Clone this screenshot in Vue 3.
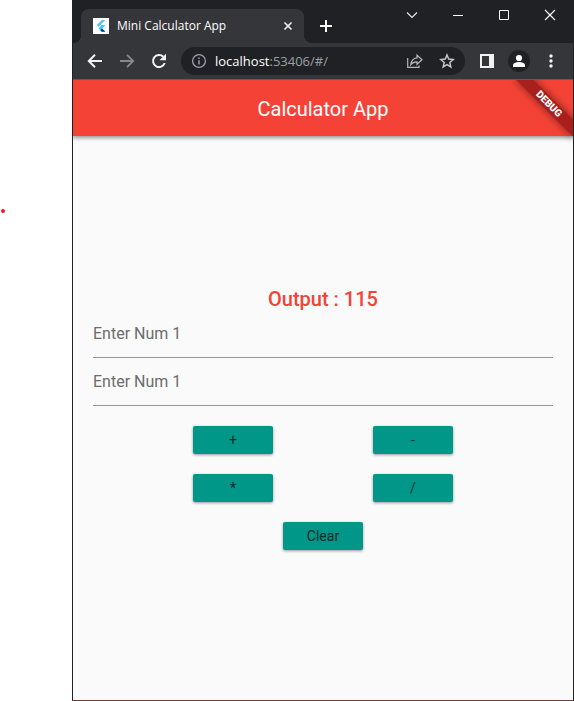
<script setup>
import { ref } from 'vue'

const output = ref(115)
const first = ref('')
const second = ref('')

const rows = [['+', '-'], ['*', '/']]

function calculate(op) {
  const a = Number(first.value)
  const b = Number(second.value)
  if (op === '+') output.value = a + b
  else if (op === '-') output.value = a - b
  else if (op === '*') output.value = a * b
  else output.value = a / b
}

function clearAll() {
  first.value = ''
  second.value = ''
  output.value = 0
}
</script>

<template>
  <div class="desktop">
    <aside class="gutter"><span class="dot"></span></aside>

    <div class="browser">
      <header class="tabstrip">
        <div class="tab">
          <svg class="favicon" viewBox="0 0 16 16" width="16" height="16" aria-hidden="true">
            <rect width="16" height="16" fill="#fff" />
            <path d="M8.800 2h3.600L5.600 8.900 3.800 7.100z" fill="#54c5f8" />
            <path d="M8.800 7h3.600L9.100 10.400 12.400 13.800H8.800L5.500 10.400z" fill="#41c0f7" />
            <path d="M9.100 10.400 12.400 13.800H8.800L7.300 12.200z" fill="#01479b" />
          </svg>
          <span class="tab-title">Mini Calculator App</span>
          <button class="tab-close" type="button" aria-label="Close tab">
            <svg viewBox="0 0 16 16" width="16" height="16"><path d="M4.500 4.500l7 7M11.500 4.500l-7 7" stroke="#f1f3f4" stroke-width="1.600" /></svg>
          </button>
        </div>
        <button class="new-tab" type="button" aria-label="New tab">
          <svg viewBox="0 0 16 16" width="16" height="16"><path d="M8 2v12M2 8h12" stroke="#fff" stroke-width="2" /></svg>
        </button>
        <nav class="window-controls" aria-label="Window">
          <button type="button" aria-label="Search tabs">
            <svg viewBox="0 0 16 16" width="16" height="16"><path d="M3 5.500l5 5 5-5" stroke="#e6e7e8" stroke-width="1.200" fill="none" /></svg>
          </button>
          <button type="button" aria-label="Minimize">
            <svg viewBox="0 0 16 16" width="16" height="16"><path d="M3 8.500h10" stroke="#fff" /></svg>
          </button>
          <button type="button" aria-label="Maximize">
            <svg viewBox="0 0 16 16" width="16" height="16"><path d="M3.500 3.500h9v9h-9z" stroke="#fff" fill="none" /></svg>
          </button>
          <button type="button" aria-label="Close">
            <svg viewBox="0 0 16 16" width="16" height="16"><path d="M3 3l10 10M13 3L3 13" stroke="#fff" stroke-width="1.200" /></svg>
          </button>
        </nav>
      </header>

      <div class="toolbar">
        <button type="button" aria-label="Back">
          <svg viewBox="0 0 16 16" width="16" height="16"><path d="M15 8H2.500M8 1.800L1.800 8 8 14.200" stroke="#f1f3f4" stroke-width="2" fill="none" /></svg>
        </button>
        <button type="button" aria-label="Forward">
          <svg viewBox="0 0 16 16" width="16" height="16"><path d="M1 8h12.500M8 1.800L14.200 8 8 14.200" stroke="#86888c" stroke-width="1.800" fill="none" /></svg>
        </button>
        <button type="button" aria-label="Reload">
          <svg viewBox="0 0 16 16" width="16" height="16">
            <path d="M13.700 10A6 6 0 1 1 12.300 3.800" stroke="#f1f3f4" stroke-width="2" fill="none" />
            <path d="M15 .800v6.500H8.500z" fill="#f1f3f4" />
          </svg>
        </button>

        <div class="omnibox">
          <button type="button" aria-label="Site information">
            <svg viewBox="0 0 16 16" width="16" height="16">
              <circle cx="8" cy="8" r="6.400" stroke="#9aa0a6" stroke-width="1.300" fill="none" />
              <path d="M8 7.200v4.300M8 4.500v1.600" stroke="#9aa0a6" stroke-width="1.500" />
            </svg>
          </button>
          <div class="address" role="textbox" aria-label="Address" contenteditable="true" spellcheck="false"><span class="host">localhost</span>:53406/#/</div>
          <button type="button" aria-label="Share">
            <svg viewBox="0 0 16 16" width="16" height="16" fill="none" stroke="#b4b6ba" stroke-width="1.200">
              <path d="M.700 5v9.400H12V12.500" />
              <path d="M10 2.200l5 4.600-5 4.500V8.800C7.200 8.700 5.300 9.600 3.800 11.600 4.300 7.900 6.400 5.300 10 4.900z" />
            </svg>
          </button>
          <button type="button" aria-label="Bookmark">
            <svg viewBox="0 0 16 16" width="16" height="16">
              <path d="M8 2l1.700 4.100 4.500.4-3.400 3 1 4.400L8 11.600l-3.800 2.300 1-4.400-3.400-3 4.500-.4z" stroke="#c4c6c9" stroke-width="1.500" fill="none" />
            </svg>
          </button>
        </div>

        <button type="button" aria-label="Side panel">
          <svg viewBox="0 0 16 16" width="16" height="16"><path fill-rule="evenodd" d="M1 1h14v14H1zM3 3v10h7V3z" fill="#f1f3f4" /></svg>
        </button>
        <button type="button" aria-label="Profile">
          <svg viewBox="0 0 22 22" width="22" height="22">
            <circle cx="11" cy="11" r="11" fill="#202124" />
            <circle cx="11" cy="8" r="3.100" fill="#fff" />
            <path d="M5 17v-1.800C5 13 8.500 12 11 12s6 1 6 3.200V17z" fill="#fff" />
          </svg>
        </button>
        <button type="button" aria-label="Browser menu">
          <svg viewBox="0 0 16 16" width="16" height="16" fill="#f1f3f4">
            <circle cx="8" cy="3" r="1.700" /><circle cx="8" cy="8" r="1.700" /><circle cx="8" cy="13" r="1.700" />
          </svg>
        </button>
      </div>

      <main class="app">
        <h1 class="appbar">Calculator App</h1>
        <div class="banner">DEBUG</div>
        <form class="calculator" @submit.prevent>
          <output class="result">Output : {{ output }}</output>
          <input v-model="first" class="field" type="text" inputmode="decimal" placeholder="Enter Num 1" aria-label="Enter Num 1" />
          <input v-model="second" class="field" type="text" inputmode="decimal" placeholder="Enter Num 1" aria-label="Enter Num 1" />
          <div v-for="row in rows" :key="row[0]" class="row">
            <button v-for="op in row" :key="op" class="key" type="button" @click="calculate(op)">{{ op }}</button>
          </div>
          <div class="row">
            <button class="key" type="button" @click="clearAll">Clear</button>
          </div>
        </form>
      </main>
    </div>
  </div>
</template>

<style>
body {
  background: #fff;
}
</style>

<style scoped>
* {
  box-sizing: border-box;
}

button {
  display: flex;
  align-items: center;
  justify-content: center;
  flex: none;
  margin: 0;
  padding: 0;
  border: 0;
  background: none;
}

svg {
  display: block;
  flex: none;
}

.desktop {
  display: flex;
  min-height: 100vh;
  font-family: Roboto, sans-serif;
}

.gutter {
  flex: none;
  width: 72px;
  padding: 209px 0 0 1px;
}

.dot {
  display: block;
  width: 4px;
  height: 4px;
  border-radius: 50%;
  background: #ed1c24;
}

.browser {
  flex: 1;
  min-width: 0;
  display: flex;
  flex-direction: column;
  border: 1px solid #202124;
  border-top: 0;
  border-bottom-color: #6b4032;
}

.tabstrip {
  display: flex;
  height: 43px;
  padding-left: 8px;
  background: #202124;
}

.tab {
  position: relative;
  display: flex;
  align-items: center;
  flex: 0 1 223px;
  min-width: 0;
  margin-top: 9px;
  padding: 0 8px 0 12px;
  border-radius: 8px 8px 0 0;
  background: #35363a;
}

.tab::before,
.tab::after {
  content: "";
  position: absolute;
  bottom: 0;
  width: 8px;
  height: 8px;
}

.tab::before {
  right: 100%;
  background: radial-gradient(circle at 0 0, transparent 8px, #35363a 8px);
}

.tab::after {
  left: 100%;
  background: radial-gradient(circle at 100% 0, transparent 8px, #35363a 8px);
}

.tab-title {
  flex: 1;
  margin-left: 8px;
  overflow: hidden;
  white-space: nowrap;
  color: #fff;
  font: 12px/16px "Open Sans", sans-serif;
}

.new-tab {
  width: 28px;
  height: 28px;
  margin: 12px 0 0 8px;
}

.window-controls {
  display: flex;
  height: 30px;
  margin-left: auto;
}

.window-controls button {
  width: 46px;
}

.toolbar {
  display: flex;
  align-items: center;
  height: 37px;
  padding: 0 6px;
  border-bottom: 1px solid #5c5e62;
  background: #35363a;
}

.toolbar button {
  width: 32px;
  height: 28px;
}

.omnibox {
  display: flex;
  align-items: center;
  flex: 1;
  min-width: 0;
  height: 28px;
  margin: 0 6px;
  padding: 0 2px;
  border-radius: 14px;
  background: #202124;
}

.address {
  flex: 1;
  min-width: 0;
  overflow: hidden;
  white-space: nowrap;
  outline: none;
  color: #9aa0a6;
  font: 13px/20px "Open Sans", sans-serif;
}

.host {
  color: #fff;
}

.app {
  position: relative;
  flex: 1;
  display: flex;
  flex-direction: column;
  overflow: hidden;
  background: #fafafa;
}

.appbar {
  margin: 0;
  padding-top: 2px;
  background: #f44336;
  box-shadow: 0 2px 4px rgba(0, 0, 0, 0.4);
  color: #fff;
  font-size: 20px;
  font-weight: 400;
  line-height: 54px;
  text-align: center;
}

.banner {
  position: absolute;
  top: 28px;
  right: -40px;
  width: 80px;
  height: 12px;
  background: #a91f1d;
  box-shadow: 0 0 8px rgba(0, 0, 0, 0.5);
  color: #fff;
  font-size: 10px;
  font-weight: 900;
  line-height: 12px;
  text-align: center;
  transform: rotate(45deg);
  transform-origin: 40px -28px;
}

.calculator {
  flex: 1;
  display: flex;
  flex-direction: column;
  justify-content: center;
  padding: 0 20px;
}

.result {
  padding-top: 2px;
  color: #f44336;
  font-size: 20px;
  font-weight: 500;
  line-height: 22px;
  text-align: center;
}

.field {
  width: 100%;
  height: 48px;
  padding: 0;
  border: 0;
  border-bottom: 1px solid #949494;
  border-radius: 0;
  outline: none;
  background: none;
  color: #212121;
  font: 16px/20px Roboto, sans-serif;
}

.field::placeholder {
  color: #6c6c6c;
  opacity: 1;
}

.row {
  display: flex;
  justify-content: center;
  gap: 100px;
  margin-top: 20px;
}

.key {
  width: 80px;
  height: 28px;
  border-radius: 2px;
  background: #009688;
  box-shadow: 0 1px 3px rgba(0, 0, 0, 0.4);
  color: #062c29;
  font: 14px/16px Roboto, sans-serif;
}
</style>
